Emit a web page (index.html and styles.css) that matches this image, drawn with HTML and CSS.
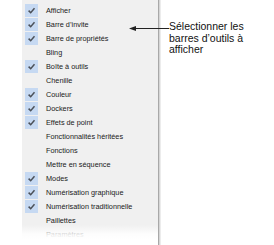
FILE: index.html
```html
<!DOCTYPE html>
<html lang="fr">
<head>
<meta charset="utf-8">
<link rel="stylesheet" href="styles.css">
</head>
<body>
<div class="page">
  <div class="menu">
    <ul class="items">
      <li class="item on"><span class="box"><svg viewBox="0 0 13 13" width="13" height="13"><path d="M3.6 6.6 L5.7 8.7 L9.5 4.3" fill="none" stroke="#4b5058" stroke-width="1.5"/></svg></span><span class="label">Afficher</span></li>
      <li class="item on"><span class="box"><svg viewBox="0 0 13 13" width="13" height="13"><path d="M3.6 6.6 L5.7 8.7 L9.5 4.3" fill="none" stroke="#4b5058" stroke-width="1.5"/></svg></span><span class="label">Barre d’invite</span></li>
      <li class="item on"><span class="box"><svg viewBox="0 0 13 13" width="13" height="13"><path d="M3.6 6.6 L5.7 8.7 L9.5 4.3" fill="none" stroke="#4b5058" stroke-width="1.5"/></svg></span><span class="label">Barre de propriétés</span></li>
      <li class="item"><span class="box"></span><span class="label">Bling</span></li>
      <li class="item on"><span class="box"><svg viewBox="0 0 13 13" width="13" height="13"><path d="M3.6 6.6 L5.7 8.7 L9.5 4.3" fill="none" stroke="#4b5058" stroke-width="1.5"/></svg></span><span class="label">Boîte à outils</span></li>
      <li class="item"><span class="box"></span><span class="label">Chenille</span></li>
      <li class="item on"><span class="box"><svg viewBox="0 0 13 13" width="13" height="13"><path d="M3.6 6.6 L5.7 8.7 L9.5 4.3" fill="none" stroke="#4b5058" stroke-width="1.5"/></svg></span><span class="label">Couleur</span></li>
      <li class="item on"><span class="box"><svg viewBox="0 0 13 13" width="13" height="13"><path d="M3.6 6.6 L5.7 8.7 L9.5 4.3" fill="none" stroke="#4b5058" stroke-width="1.5"/></svg></span><span class="label">Dockers</span></li>
      <li class="item on"><span class="box"><svg viewBox="0 0 13 13" width="13" height="13"><path d="M3.6 6.6 L5.7 8.7 L9.5 4.3" fill="none" stroke="#4b5058" stroke-width="1.5"/></svg></span><span class="label">Effets de point</span></li>
      <li class="item"><span class="box"></span><span class="label">Fonctionnalités héritées</span></li>
      <li class="item"><span class="box"></span><span class="label">Fonctions</span></li>
      <li class="item"><span class="box"></span><span class="label">Mettre en séquence</span></li>
      <li class="item on"><span class="box"><svg viewBox="0 0 13 13" width="13" height="13"><path d="M3.6 6.6 L5.7 8.7 L9.5 4.3" fill="none" stroke="#4b5058" stroke-width="1.5"/></svg></span><span class="label">Modes</span></li>
      <li class="item on"><span class="box"><svg viewBox="0 0 13 13" width="13" height="13"><path d="M3.6 6.6 L5.7 8.7 L9.5 4.3" fill="none" stroke="#4b5058" stroke-width="1.5"/></svg></span><span class="label">Numérisation graphique</span></li>
      <li class="item on"><span class="box"><svg viewBox="0 0 13 13" width="13" height="13"><path d="M3.6 6.6 L5.7 8.7 L9.5 4.3" fill="none" stroke="#4b5058" stroke-width="1.5"/></svg></span><span class="label">Numérisation traditionnelle</span></li>
      <li class="item"><span class="box"></span><span class="label">Paillettes</span></li>
      <li class="item"><span class="box"></span><span class="label">Paramètres</span></li>
    </ul>
    <div class="fade"></div>
  </div>
  <div class="callout">
    <svg class="arrow" viewBox="0 0 40 7" width="40" height="7"><path d="M0 3.5 L7 1 L7 6 Z" fill="#222"/><path d="M6 3.5 H40" stroke="#222" stroke-width="1"/></svg>
    <p class="note">Sélectionner les barres d’outils à afficher</p>
  </div>
</div>
</body>
</html>
```

FILE: styles.css
```css
html, body {
  margin: 0;
  padding: 0;
  background: #ffffff;
}
.page {
  position: relative;
  display: flex;
  width: 274px;
  height: 245px;
  overflow: hidden;
}
.menu {
  position: relative;
  margin-left: 22px;
  width: 136px;
  height: 245px;
  background: #f0f0f0;
  border-right: 1px solid #a8a8a8;
  box-shadow: 1px 0 0 #d6d6d6, 2px 0 0 #ececec;
  overflow: hidden;
}
.items {
  list-style: none;
  margin: 0;
  padding: 3px 0 0 3px;
}
.item {
  display: flex;
  align-items: center;
  height: 14px;
  font-family: "Liberation Sans", Arial, sans-serif;
  font-size: 7.3px;
  color: #1a1a1a;
}
.box {
  width: 13px;
  height: 13px;
  flex: 0 0 13px;
  display: flex;
}
.item.on .box {
  background: #c6d9f2;
}
.label {
  margin-left: 8px;
  white-space: nowrap;
}
.fade {
  position: absolute;
  left: 0;
  right: 0;
  bottom: 0;
  height: 20px;
  background: linear-gradient(to bottom, rgba(255,255,255,0), rgba(255,255,255,0.85) 45%, #ffffff 70%);
}
.callout {
  position: relative;
  flex: 1;
  padding-left: 10px;
}
.arrow {
  position: absolute;
  left: -30px;
  top: 25px;
}
.note {
  margin: 21px 0 0 0;
  font-family: "Liberation Sans", Arial, sans-serif;
  font-size: 10.5px;
  line-height: 11.5px;
  color: #111;
  width: 90px;
}
```
